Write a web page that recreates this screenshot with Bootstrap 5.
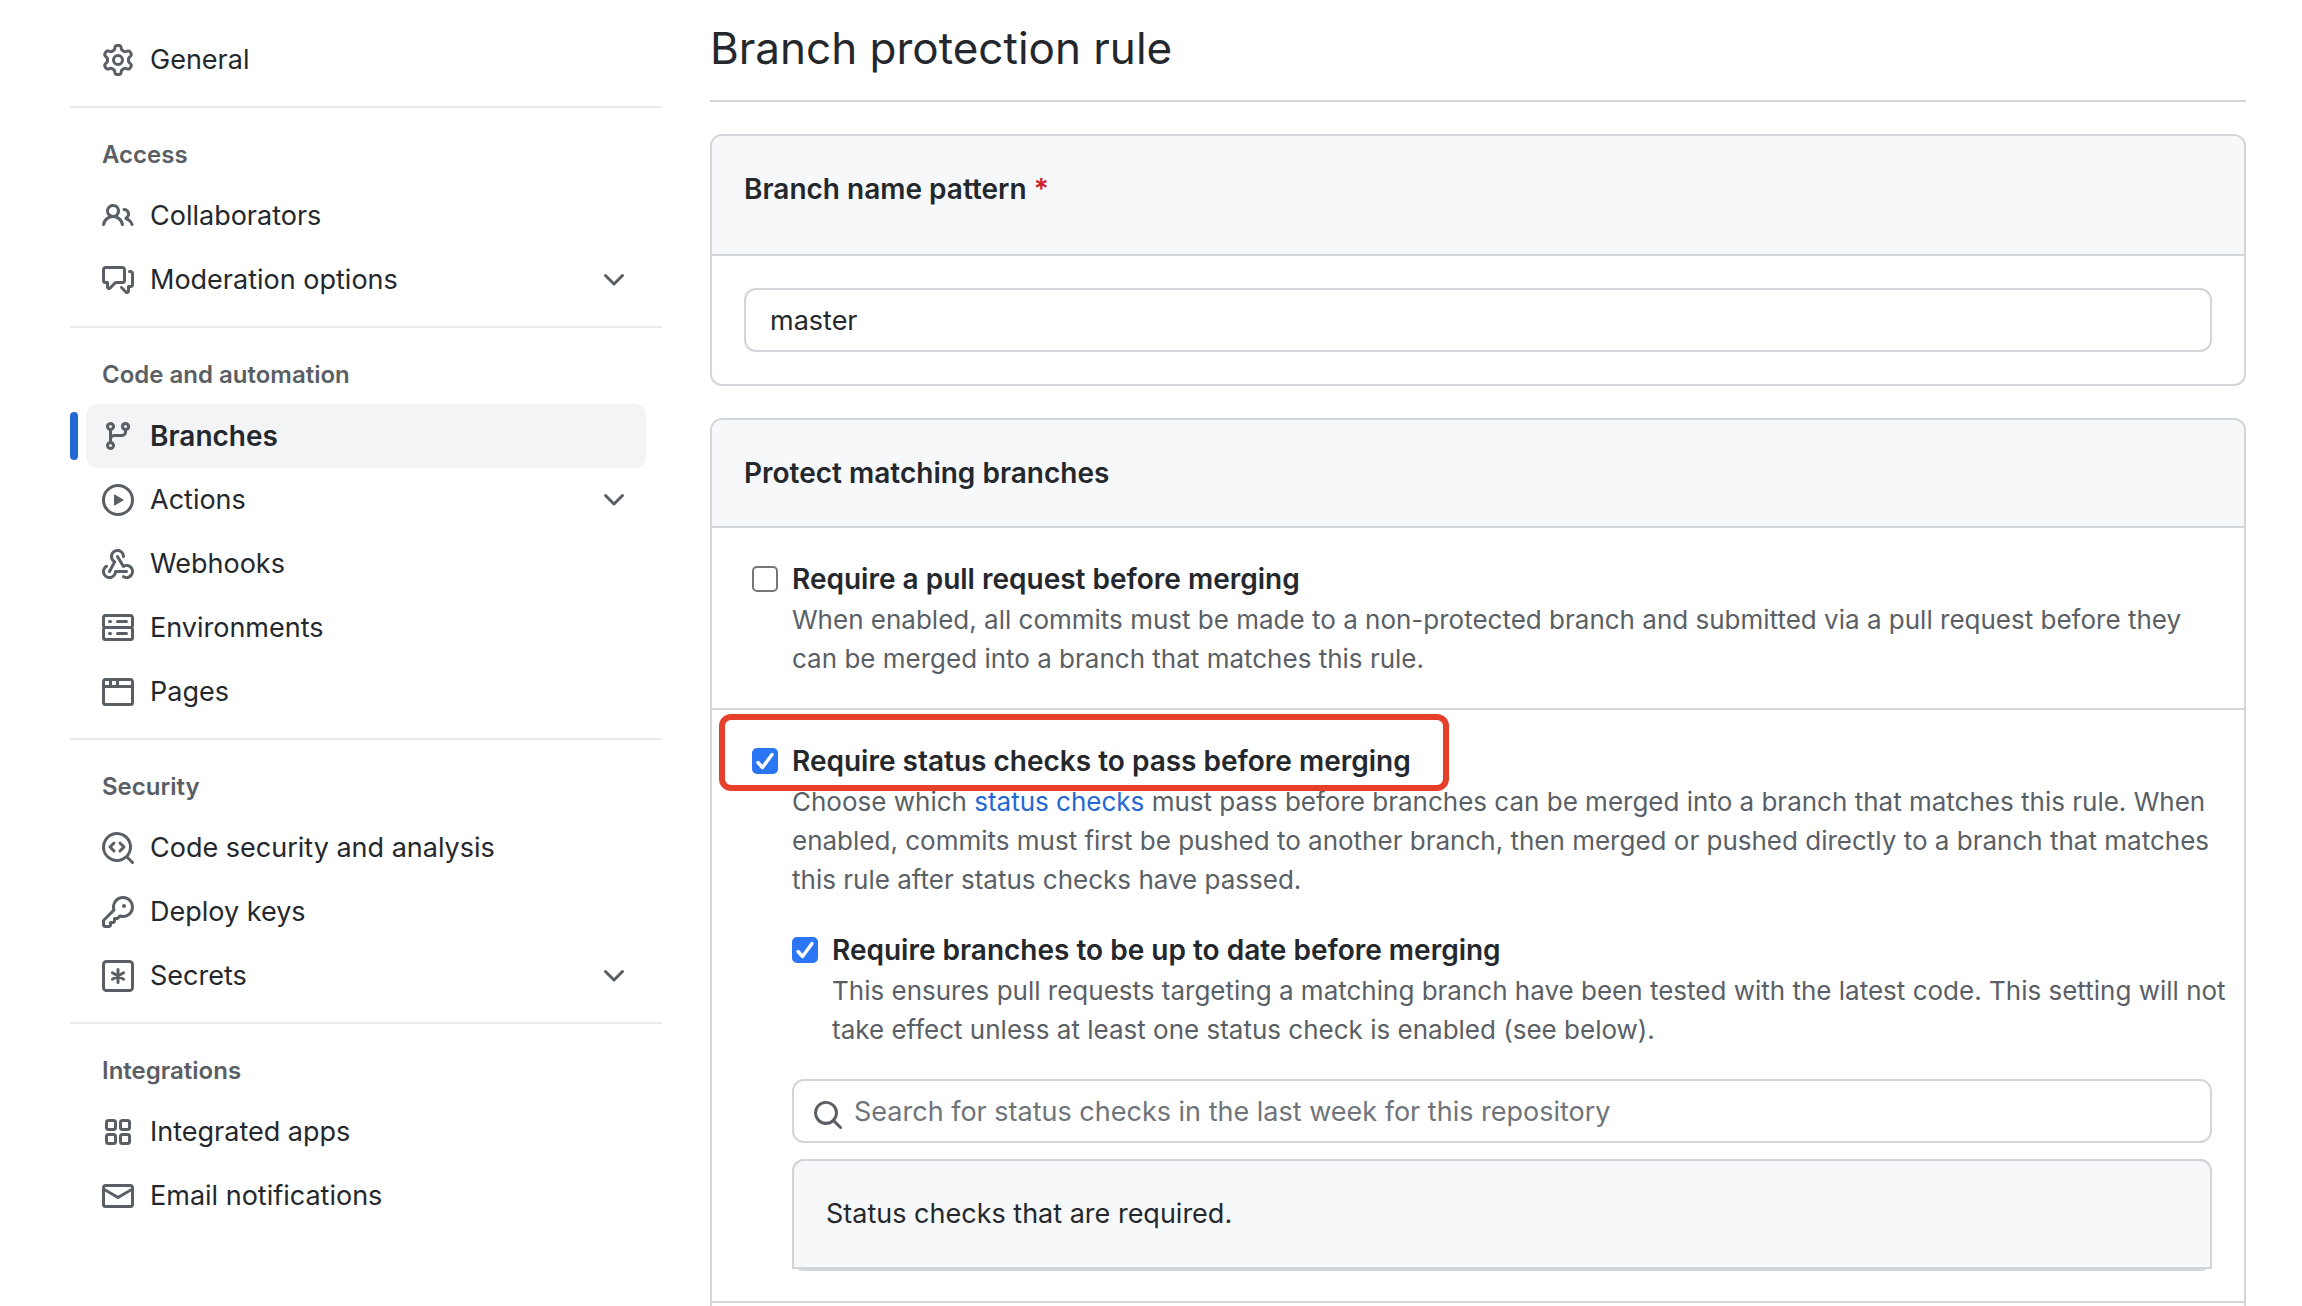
<!DOCTYPE html>
<html lang="en">
<head>
<meta charset="utf-8">
<meta name="viewport" content="width=device-width, initial-scale=1">
<title>Branch protection rule</title>
<link href="https://cdn.jsdelivr.net/npm/bootstrap@5.3.0/dist/css/bootstrap.min.css" rel="stylesheet">
<style>
  :root { --fg: #24282d; --fg-muted: #5a5f65; --line: #d2d5d9; --subtle: #f6f8fa; --accent: #2468d4; }
  body { font-family: Inter, "Liberation Sans", sans-serif; font-size: 27px; line-height: 42px; color: var(--fg); background: #fff; }
  .page-shell { padding: 0 56px 0 70px; gap: 48px; }
  .settings-nav { width: 592px; padding-top: 28px; }
  .nav-group { padding-bottom: 14px; border-bottom: 2px solid #e8eaec; }
  .nav-group:last-child { border-bottom: 0; }
  .nav-title { padding: 29px 32px 11px; font-size: 24px; line-height: 36px; font-weight: 600; color: var(--fg-muted); }
  .nav-entry { gap: 16px; height: 64px; margin: 0 16px; padding: 0 16px; border-radius: 12px; color: var(--fg); text-decoration: none; position: relative; }
  .nav-entry.active { background: #f2f4f6; font-size: 28px; font-weight: 600; }
  .nav-entry.active::before { content: ""; position: absolute; left: -16px; top: 8px; width: 8px; height: 48px; border-radius: 4px; background: var(--accent); }
  .oct { width: 32px; height: 32px; flex: none; fill: var(--fg-muted); }
  .oct-line { fill: none; stroke: var(--fg-muted); stroke-width: 1.5; stroke-linecap: round; }
  .page-title { margin: 0 0 32px; padding: 12px 0 16px; border-bottom: 2px solid var(--line); font-size: 44px; line-height: 72px; font-weight: 400; }
  .rule-card { border: 2px solid var(--line); border-radius: 12px; margin-bottom: 32px; }
  .rule-card .card-header { padding: 32px; background: var(--subtle); border-bottom: 2px solid var(--line); border-radius: 10px 10px 0 0; font-size: 28px; font-weight: 600; }
  .rule-card .card-header.tall { padding-bottom: 44px; }
  .rule-card .card-body { padding: 32px; }
  .rule-card.continues { border-bottom: 0; border-radius: 12px 12px 0 0; margin-bottom: 0; }
  .required-star { color: #cf222e; }
  .field { height: 64px; border: 2px solid var(--line); border-radius: 12px; padding: 0 24px; font-size: 27px; line-height: 42px; color: var(--fg); }
  .field::placeholder { color: #6e7479; opacity: 1; }
  .field-search { padding-left: 60px; }
  .search-icon { position: absolute; left: 20px; top: 20px; }
  .rule-row { padding: 30px 32px; border-bottom: 2px solid var(--line); position: relative; }
  .rule-row.next { padding: 0; border: 0; height: 3px; }
  .rule-check { display: flex; gap: 14px; padding-left: 8px; }
  .rule-check .form-check-input { width: 26px; height: 26px; margin: 8px 0 0; border: 2px solid #767676; border-radius: 5px; flex: none; background-size: 26px 26px; }
  .rule-check .form-check-input:checked { border-color: #2a76f4; background-color: #2a76f4; background-origin: border-box; background-image: url("data:image/svg+xml,%3Csvg xmlns='http://www.w3.org/2000/svg' viewBox='0 0 26 26'%3E%3Cpath fill='none' stroke='%23fff' stroke-width='3.4' stroke-linecap='round' stroke-linejoin='round' d='M6 14.5l4.5 5L20 6.5'/%3E%3C/svg%3E"); }
  .rule-check label { font-size: 28px; font-weight: 600; display: block; }
  .rule-note { margin: 0 -16px 0 0; font-size: 26px; line-height: 39px; color: var(--fg-muted); }
  .rule-note a { color: var(--accent); text-decoration: none; }
  .nested { padding: 30px 0 0 48px; }
  .nested .rule-check { padding-left: 0; margin-bottom: 30px; }
  .check-list { margin-top: 16px; border: 2px solid var(--line); border-radius: 12px; }
  .check-list-head { margin: -2px -2px 0; border: 2px solid var(--line); border-radius: 12px 12px 0 0; background: var(--subtle); padding: 32px; }
  .callout-frame { position: absolute; left: 7px; top: 4px; width: 730px; height: 77px; border: 6px solid #e6402a; border-radius: 12px; pointer-events: none; }
</style>
</head>
<body>
<div class="page-shell d-flex align-items-start">
  <nav class="settings-nav flex-shrink-0" aria-label="Settings">
    <div class="nav-group">
      <a class="nav-entry d-flex align-items-center" href="#">
        <svg class="oct" viewBox="0 0 16 16"><path d="M8 0a8.2 8.2 0 0 1 .701.031C9.444.095 9.99.645 10.16 1.29l.288 1.107c.018.066.079.158.212.224.231.114.454.243.668.386.123.082.233.09.299.071l1.103-.303c.644-.176 1.392.021 1.82.63.27.385.506.792.704 1.218.315.675.111 1.422-.364 1.891l-.814.806c-.049.048-.098.147-.088.294.016.257.016.515 0 .772-.01.147.038.246.088.294l.814.806c.475.469.679 1.216.364 1.891a7.977 7.977 0 0 1-.704 1.217c-.428.61-1.176.807-1.82.63l-1.102-.302c-.067-.019-.177-.011-.3.071a5.909 5.909 0 0 1-.668.386c-.133.066-.194.158-.211.224l-.29 1.106c-.168.646-.715 1.196-1.458 1.26a8.006 8.006 0 0 1-1.402 0c-.743-.064-1.289-.614-1.458-1.26l-.289-1.106c-.018-.066-.079-.158-.212-.224a5.738 5.738 0 0 1-.668-.386c-.123-.082-.233-.09-.299-.071l-1.103.303c-.644.176-1.392-.021-1.82-.63a8.12 8.12 0 0 1-.704-1.218c-.315-.675-.111-1.422.363-1.891l.815-.806c.05-.048.098-.147.088-.294a6.214 6.214 0 0 1 0-.772c.01-.147-.038-.246-.088-.294l-.815-.806C.635 6.045.431 5.298.746 4.623a7.92 7.92 0 0 1 .704-1.217c.428-.61 1.176-.807 1.82-.63l1.102.302c.067.019.177.011.3-.071.214-.143.437-.272.668-.386.133-.066.194-.158.211-.224l.29-1.106C6.009.645 6.556.095 7.299.03 7.53.01 7.764 0 8 0Zm-.571 1.525c-.036.003-.108.036-.137.146l-.289 1.105c-.147.561-.549.967-.998 1.189-.173.086-.34.183-.5.29-.417.278-.97.423-1.529.27l-1.103-.303c-.109-.03-.175.016-.195.045-.22.312-.412.644-.573.99-.014.031-.021.11.059.19l.815.806c.411.406.562.957.53 1.456a4.709 4.709 0 0 0 0 .582c.032.499-.119 1.05-.53 1.456l-.815.806c-.081.08-.073.159-.059.19.162.346.353.677.573.989.02.03.085.076.195.046l1.102-.303c.56-.153 1.113-.008 1.53.27.161.107.328.204.501.29.447.222.85.629.997 1.189l.289 1.105c.029.109.101.143.137.146a6.6 6.6 0 0 0 1.142 0c.036-.003.108-.036.137-.146l.289-1.105c.147-.561.549-.967.998-1.189.173-.086.34-.183.5-.29.417-.278.97-.423 1.529-.27l1.103.303c.109.029.175-.016.195-.045.22-.313.411-.644.573-.99.014-.031.021-.11-.059-.19l-.815-.806c-.411-.406-.562-.957-.53-1.456a4.709 4.709 0 0 0 0-.582c-.032-.499.119-1.05.53-1.456l.815-.806c.081-.08.073-.159.059-.19a6.464 6.464 0 0 0-.573-.989c-.02-.03-.085-.076-.195-.046l-1.102.303c-.56.153-1.113.008-1.53-.27a4.44 4.44 0 0 0-.501-.29c-.447-.222-.85-.629-.997-1.189l-.289-1.105c-.029-.11-.101-.143-.137-.146a6.6 6.6 0 0 0-1.142 0ZM11 8a3 3 0 1 1-6 0 3 3 0 0 1 6 0ZM9.5 8a1.5 1.5 0 1 0-3.001.001A1.5 1.5 0 0 0 9.5 8Z"/></svg>
        <span>General</span>
      </a>
    </div>

    <div class="nav-group">
      <div class="nav-title">Access</div>
      <a class="nav-entry d-flex align-items-center" href="#">
        <svg class="oct" viewBox="0 0 16 16"><path d="M2 5.5a3.5 3.5 0 1 1 5.898 2.549 5.508 5.508 0 0 1 3.034 4.084.75.75 0 1 1-1.482.235 4 4 0 0 0-7.9 0 .75.75 0 0 1-1.482-.236A5.507 5.507 0 0 1 3.102 8.05 3.493 3.493 0 0 1 2 5.5ZM11 4a3.001 3.001 0 0 1 2.22 5.018 5.01 5.01 0 0 1 2.56 3.012.749.749 0 0 1-.885.954.752.752 0 0 1-.549-.514 3.507 3.507 0 0 0-2.522-2.372.75.75 0 0 1-.574-.73v-.352a.75.75 0 0 1 .416-.672A1.5 1.5 0 0 0 11 5.5.75.75 0 0 1 11 4Zm-5.5-.5a2 2 0 1 0-.001 3.999A2 2 0 0 0 5.5 3.5Z"/></svg>
        <span>Collaborators</span>
      </a>
      <a class="nav-entry d-flex align-items-center" href="#">
        <svg class="oct" viewBox="0 0 16 16"><path d="M1.75 1h8.5c.966 0 1.75.784 1.75 1.75v5.5A1.75 1.75 0 0 1 10.25 10H7.061l-2.574 2.573A1.458 1.458 0 0 1 2 11.543V10h-.25A1.75 1.75 0 0 1 0 8.25v-5.5C0 1.784.784 1 1.75 1ZM1.5 2.75v5.5c0 .138.112.25.25.25h1a.75.75 0 0 1 .75.75v2.19l2.72-2.72a.749.749 0 0 1 .53-.22h3.5a.25.25 0 0 0 .25-.25v-5.5a.25.25 0 0 0-.25-.25h-8.5a.25.25 0 0 0-.25.25Zm13 2a.25.25 0 0 0-.25-.25h-.5a.75.75 0 0 1 0-1.5h.5c.966 0 1.75.784 1.75 1.75v5.5A1.75 1.75 0 0 1 14.25 12H14v1.543a1.458 1.458 0 0 1-2.487 1.03L9.22 12.28a.749.749 0 0 1 .326-1.275.749.749 0 0 1 .734.215l2.22 2.22v-2.19a.75.75 0 0 1 .75-.75h1a.25.25 0 0 0 .25-.25Z"/></svg>
        <span>Moderation options</span>
        <svg class="oct ms-auto" viewBox="0 0 16 16"><path d="M12.78 5.22a.749.749 0 0 1 0 1.06l-4.25 4.25a.749.749 0 0 1-1.06 0L3.22 6.28a.749.749 0 1 1 1.06-1.06L8 8.939l3.72-3.719a.749.749 0 0 1 1.06 0Z"/></svg>
      </a>
    </div>

    <div class="nav-group">
      <div class="nav-title">Code and automation</div>
      <a class="nav-entry active d-flex align-items-center" href="#" aria-current="page">
        <svg class="oct" viewBox="0 0 16 16"><path d="M9.5 3.25a2.25 2.25 0 1 1 3 2.122V6A2.5 2.5 0 0 1 10 8.5H6a1 1 0 0 0-1 1v1.128a2.251 2.251 0 1 1-1.5 0V5.372a2.25 2.25 0 1 1 1.5 0v1.836A2.493 2.493 0 0 1 6 7h4a1 1 0 0 0 1-1v-.628A2.25 2.25 0 0 1 9.5 3.25Zm-6 0a.75.75 0 1 0 1.5 0 .75.75 0 0 0-1.5 0Zm8.25-.75a.75.75 0 1 0 0 1.5.75.75 0 0 0 0-1.5ZM4.25 12a.75.75 0 1 0 0 1.5.75.75 0 0 0 0-1.5Z"/></svg>
        <span>Branches</span>
      </a>
      <a class="nav-entry d-flex align-items-center" href="#">
        <svg class="oct" viewBox="0 0 16 16"><path d="M8 0a8 8 0 1 1 0 16A8 8 0 0 1 8 0ZM1.5 8a6.5 6.5 0 1 0 13 0 6.5 6.5 0 0 0-13 0Zm4.879-2.773 4.264 2.559a.25.25 0 0 1 0 .428l-4.264 2.559A.25.25 0 0 1 6 10.559V5.442a.25.25 0 0 1 .379-.215Z"/></svg>
        <span>Actions</span>
        <svg class="oct ms-auto" viewBox="0 0 16 16"><path d="M12.78 5.22a.749.749 0 0 1 0 1.06l-4.25 4.25a.749.749 0 0 1-1.06 0L3.22 6.28a.749.749 0 1 1 1.06-1.06L8 8.939l3.72-3.719a.749.749 0 0 1 1.06 0Z"/></svg>
      </a>
      <a class="nav-entry d-flex align-items-center" href="#">
        <svg class="oct" viewBox="0 0 16 16"><path d="M5.5 4.25a2.25 2.25 0 0 1 4.5 0 .75.75 0 0 0 1.5 0 3.75 3.75 0 1 0-6.14 2.889l-2.272 4.258a.75.75 0 0 0 1.324.706L7 7.25a.75.75 0 0 0-.309-1.015A2.25 2.25 0 0 1 5.5 4.25Z"/><path d="M7.364 3.607a.75.75 0 0 1 1.03.257l2.608 4.349a3.75 3.75 0 1 1-.628 6.785.75.75 0 0 1 .752-1.299 2.25 2.25 0 1 0-.033-3.88.75.75 0 0 1-1.03-.256L7.107 4.636a.75.75 0 0 1 .257-1.03Z"/><path d="M2.9 8.776A.75.75 0 0 1 2.625 9.8 2.25 2.25 0 1 0 6 11.75a.75.75 0 0 1 .75-.751h5.5a.75.75 0 0 1 0 1.5H7.425a3.751 3.751 0 1 1-5.55-3.998.75.75 0 0 1 1.024.274Z"/></svg>
        <span>Webhooks</span>
      </a>
      <a class="nav-entry d-flex align-items-center" href="#">
        <svg class="oct" viewBox="0 0 16 16"><path d="M1.75 1h12.5c.966 0 1.75.784 1.75 1.75v4c0 .372-.116.717-.314 1 .198.283.314.628.314 1v4a1.75 1.75 0 0 1-1.75 1.75H1.75A1.75 1.75 0 0 1 0 12.75v-4c0-.358.109-.707.314-1a1.739 1.739 0 0 1-.314-1v-4C0 1.784.784 1 1.75 1ZM1.5 2.75v4c0 .138.112.25.25.25h12.5a.25.25 0 0 0 .25-.25v-4a.25.25 0 0 0-.25-.25H1.75a.25.25 0 0 0-.25.25Zm.25 5.75a.25.25 0 0 0-.25.25v4c0 .138.112.25.25.25h12.5a.25.25 0 0 0 .25-.25v-4a.25.25 0 0 0-.25-.25ZM7 4.75A.75.75 0 0 1 7.75 4h4.5a.75.75 0 0 1 0 1.5h-4.5A.75.75 0 0 1 7 4.75ZM7.75 10h4.5a.75.75 0 0 1 0 1.5h-4.5a.75.75 0 0 1 0-1.5ZM3 4.75A.75.75 0 0 1 3.75 4h.5a.75.75 0 0 1 0 1.5h-.5A.75.75 0 0 1 3 4.75ZM3.75 10h.5a.75.75 0 0 1 0 1.5h-.5a.75.75 0 0 1 0-1.5Z"/></svg>
        <span>Environments</span>
      </a>
      <a class="nav-entry d-flex align-items-center" href="#">
        <svg class="oct" viewBox="0 0 16 16"><path d="M0 2.75C0 1.784.784 1 1.75 1h12.5c.966 0 1.75.784 1.75 1.75v10.5A1.75 1.75 0 0 1 14.25 15H1.75A1.75 1.75 0 0 1 0 13.25ZM14.5 6h-13v7.25c0 .138.112.25.25.25h12.5a.25.25 0 0 0 .25-.25Zm-6-3.5v2h6V2.75a.25.25 0 0 0-.25-.25ZM5 2.5v2h2v-2Zm-3.25 0a.25.25 0 0 0-.25.25V4.5h2v-2Z"/></svg>
        <span>Pages</span>
      </a>
    </div>

    <div class="nav-group">
      <div class="nav-title">Security</div>
      <a class="nav-entry d-flex align-items-center" href="#">
        <svg class="oct" viewBox="0 0 16 16"><path d="M8.47 4.97a.75.75 0 0 0 0 1.06L9.94 7.5 8.47 8.97a.75.75 0 1 0 1.06 1.06l2-2a.75.75 0 0 0 0-1.06l-2-2a.75.75 0 0 0-1.06 0ZM6.53 6.03a.75.75 0 0 0-1.06-1.06l-2 2a.75.75 0 0 0 0 1.06l2 2a.75.75 0 1 0 1.06-1.06L5.06 7.5l1.47-1.47Z"/><path d="M12.246 13.307a7.501 7.501 0 1 1 1.06-1.06l2.474 2.473a.749.749 0 1 1-1.06 1.06ZM1.5 7.5a6.002 6.002 0 0 0 3.608 5.504 6.002 6.002 0 0 0 6.486-1.117.748.748 0 0 1 .292-.293A6 6 0 1 0 1.5 7.5Z"/></svg>
        <span>Code security and analysis</span>
      </a>
      <a class="nav-entry d-flex align-items-center" href="#">
        <svg class="oct" viewBox="0 0 16 16"><path d="M10.5 0a5.499 5.499 0 1 1-1.288 10.848l-.932.932a.749.749 0 0 1-.53.22H7v.75a.749.749 0 0 1-.22.53l-.5.5a.749.749 0 0 1-.53.22H5v.75a.749.749 0 0 1-.22.53l-.5.5a.749.749 0 0 1-.53.22h-2A1.75 1.75 0 0 1 0 14.25v-2c0-.199.079-.389.22-.53l4.932-4.932A5.5 5.5 0 0 1 10.5 0Zm-4 5.5c-.001.431.069.86.205 1.269a.75.75 0 0 1-.181.768L1.5 12.56v1.69c0 .138.112.25.25.25h1.69l.06-.06v-1.19a.75.75 0 0 1 .75-.75h1.19l.06-.06v-1.19a.75.75 0 0 1 .75-.75h1.19l1.023-1.025a.75.75 0 0 1 .768-.18A4 4 0 1 0 6.5 5.5ZM11 6a1 1 0 1 1 0-2 1 1 0 0 1 0 2Z"/></svg>
        <span>Deploy keys</span>
      </a>
      <a class="nav-entry d-flex align-items-center" href="#">
        <svg class="oct oct-line" viewBox="0 0 16 16"><rect x=".75" y=".75" width="14.5" height="14.5" rx="1.5"/><path d="M8 4.75v6.5M5.2 6.4l5.6 3.2M10.8 6.4 5.2 9.6"/></svg>
        <span>Secrets</span>
        <svg class="oct ms-auto" viewBox="0 0 16 16"><path d="M12.78 5.22a.749.749 0 0 1 0 1.06l-4.25 4.25a.749.749 0 0 1-1.06 0L3.22 6.28a.749.749 0 1 1 1.06-1.06L8 8.939l3.72-3.719a.749.749 0 0 1 1.06 0Z"/></svg>
      </a>
    </div>

    <div class="nav-group">
      <div class="nav-title">Integrations</div>
      <a class="nav-entry d-flex align-items-center" href="#">
        <svg class="oct oct-line" viewBox="0 0 16 16"><rect x="2.25" y="2.25" width="4.5" height="4.5" rx="1"/><rect x="9.25" y="2.25" width="4.5" height="4.5" rx="1"/><rect x="2.25" y="9.25" width="4.5" height="4.5" rx="1"/><rect x="9.25" y="9.25" width="4.5" height="4.5" rx="1"/></svg>
        <span>Integrated apps</span>
      </a>
      <a class="nav-entry d-flex align-items-center" href="#">
        <svg class="oct" viewBox="0 0 16 16"><path d="M1.75 2h12.5c.966 0 1.75.784 1.75 1.75v8.5A1.75 1.75 0 0 1 14.25 14H1.75A1.75 1.75 0 0 1 0 12.25v-8.5C0 2.784.784 2 1.75 2ZM1.5 12.251c0 .138.112.25.25.25h12.5a.25.25 0 0 0 .25-.25V5.809L8.38 9.397a.75.75 0 0 1-.76 0L1.5 5.809v6.442Zm13-8.181v-.32a.25.25 0 0 0-.25-.25H1.75a.25.25 0 0 0-.25.25v.32L8 7.88Z"/></svg>
        <span>Email notifications</span>
      </a>
    </div>
  </nav>

  <main class="flex-grow-1">
    <h1 class="page-title">Branch protection rule</h1>

    <section class="card rule-card">
      <div class="card-header tall">
        <label for="pattern">Branch name pattern <span class="required-star">*</span></label>
      </div>
      <div class="card-body">
        <input class="form-control field" id="pattern" type="text" value="master">
      </div>
    </section>

    <section class="card rule-card continues">
      <div class="card-header">Protect matching branches</div>
      <div class="rule-row">
        <div class="rule-check">
          <input class="form-check-input" type="checkbox" id="require-pr">
          <div>
            <label for="require-pr">Require a pull request before merging</label>
            <p class="rule-note">When enabled, all commits must be made to a non-protected branch and submitted via a pull request before they can be merged into a branch that matches this rule.</p>
          </div>
        </div>
      </div>
      <div class="rule-row">
        <div class="rule-check">
          <input class="form-check-input" type="checkbox" id="require-status" checked>
          <div>
            <label for="require-status">Require status checks to pass before merging</label>
            <p class="rule-note">Choose which <a href="#">status checks</a> must pass before branches can be merged into a branch that matches this rule. When enabled, commits must first be pushed to another branch, then merged or pushed directly to a branch that matches this rule after status checks have passed.</p>
          </div>
        </div>
        <div class="nested">
          <div class="rule-check">
            <input class="form-check-input" type="checkbox" id="require-fresh" checked>
            <div>
              <label for="require-fresh">Require branches to be up to date before merging</label>
              <p class="rule-note">This ensures pull requests targeting a matching branch have been tested with the latest code. This setting will not take effect unless at least one status check is enabled (see below).</p>
            </div>
          </div>
          <div class="position-relative">
            <svg class="oct search-icon" viewBox="0 0 16 16"><path d="M10.68 11.74a6 6 0 0 1-7.922-8.982 6 6 0 0 1 8.982 7.922l3.04 3.04a.749.749 0 0 1-.326 1.275.749.749 0 0 1-.734-.215ZM11.5 7a4.499 4.499 0 1 0-8.997 0A4.499 4.499 0 0 0 11.5 7Z"/></svg>
            <input class="form-control field field-search" type="search" aria-label="Search for status checks" placeholder="Search for status checks in the last week for this repository">
          </div>
          <div class="check-list">
            <div class="check-list-head">Status checks that are required.</div>
          </div>
        </div>
        <div class="callout-frame"></div>
      </div>
      <div class="rule-row next"></div>
    </section>
  </main>
</div>
<script src="https://cdn.jsdelivr.net/npm/bootstrap@5.3.0/dist/js/bootstrap.bundle.min.js"></script>
</body>
</html>
